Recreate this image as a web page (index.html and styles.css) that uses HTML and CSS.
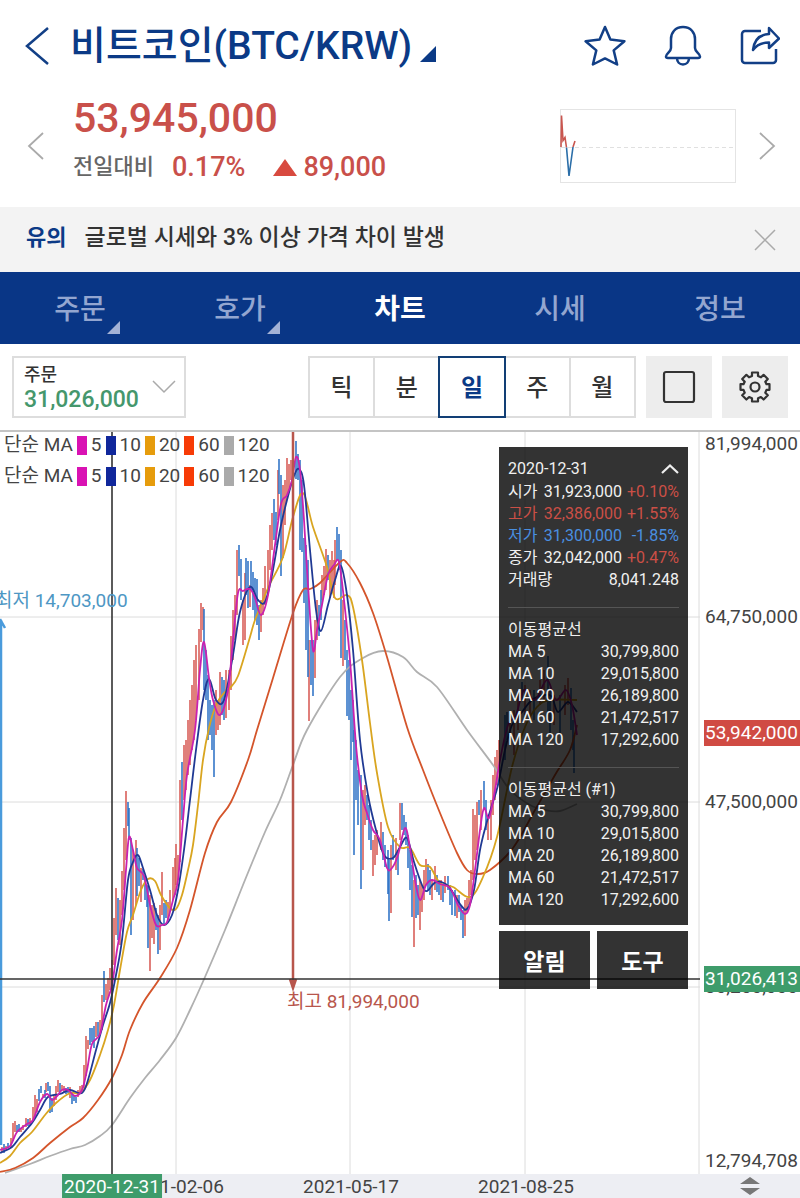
FILE: index.html
```html
<!DOCTYPE html>
<html lang="ko">
<head>
    <meta charset="UTF-8">
    <meta name="viewport" content="width=device-width, initial-scale=1">
    <title>비트코인(BTC/KRW)</title>
    <link rel="stylesheet" href="styles.css">
</head>
<body>
<header class="header">
    <div class="header__top">
        <button class="icon-button" aria-label="뒤로">
            <svg width="26" height="40" viewBox="0 0 26 40"><path d="M24 2L3 20l21 18" fill="none" stroke="#123f86" stroke-width="2.5"/></svg>
        </button>
        <h1 class="header__title">비트코인(BTC/KRW)</h1>
        <span class="corner corner--title"></span>
        <div class="header__actions">
            <button class="icon-button" aria-label="관심">
                <svg width="42" height="42" viewBox="0 0 42 42"><path d="M21 2l5.400 12.600 14 1.600-10.700 9.200 3.400 14.100L21 33.400 8.900 39.500l3.400-14.100L1.600 16.200l14-1.600z" fill="none" stroke="#123f86" stroke-width="2.500" stroke-linejoin="round"/></svg>
            </button>
            <button class="icon-button" aria-label="알림 설정">
                <svg width="38" height="42" viewBox="0 0 38 42"><g fill="none" stroke="#123f86" stroke-width="2.500" stroke-linejoin="round"><path d="M19 2C11 2 7 8 7 14v9c0 4-5 5.500-5 8.500 0 1 .8 1.500 2 1.500h30c1.200 0 2-.5 2-1.500 0-3-5-4.500-5-8.500v-9C31 8 27 2 19 2z"/><path d="M13 33c0 4 2.500 6.500 6 6.500s6-2.500 6-6.500"/></g></svg>
            </button>
            <button class="icon-button" aria-label="공유">
                <svg width="40" height="42" viewBox="0 0 40 42"><g fill="none" stroke="#123f86" stroke-width="2.500" stroke-linejoin="round"><path d="M21 6H5a3 3 0 0 0-3 3v26a3 3 0 0 0 3 3h28a3 3 0 0 0 3-3V24"/><path d="M29 3l10 10.500L29 23v-5.500c-7 0-12 2-16 7.500C14 16 19 9.500 29 9z"/></g></svg>
            </button>
        </div>
    </div>
    <div class="quote">
        <button class="icon-button" aria-label="이전 종목">
            <svg width="18" height="28" viewBox="0 0 18 28"><path d="M16 1L2 14l14 13" fill="none" stroke="#aaa" stroke-width="1.8"/></svg>
        </button>
        <div class="quote__info">
            <div class="quote__price">53,945,000</div>
            <div class="quote__change">
                <span class="quote__label">전일대비</span>
                <span>0.17%</span>
                <span class="quote__diff">89,000</span>
            </div>
        </div>
        <svg class="quote__spark" viewBox="0 0 176 74">
            <rect x=".5" y=".5" width="175" height="73" fill="#fff" stroke="#e4e4e4"/>
            <path d="M1 38.500h174" stroke="#e0e0e0" stroke-dasharray="4 3"/>
            <path d="M1 38L1.500 6.500l1.500 25 2-3 1.500 10M13 38l2-6" fill="none" stroke="#c9564f" stroke-width="1.6"/>
            <path d="M6.500 38.500L9 67l4-29" fill="none" stroke="#2b6ea8" stroke-width="1.6"/>
        </svg>
        <button class="icon-button" aria-label="다음 종목">
            <svg width="18" height="28" viewBox="0 0 18 28"><path d="M2 1l14 13L2 27" fill="none" stroke="#aaa" stroke-width="1.8"/></svg>
        </button>
    </div>
</header>

<div class="notice">
    <b class="notice__type">유의</b>
    <span class="notice__text">글로벌 시세와 3% 이상 가격 차이 발생</span>
    <button class="icon-button" aria-label="닫기">
        <svg width="22" height="22" viewBox="0 0 22 22"><path d="M1 1l20 20M21 1L1 21" stroke="#aaa" stroke-width="1.5"/></svg>
    </button>
</div>

<nav class="tabs">
    <a class="tabs__item" href="#order"><span class="tabs__name">주문<i class="corner corner--tab"></i></span></a>
    <a class="tabs__item" href="#book"><span class="tabs__name">호가<i class="corner corner--tab"></i></span></a>
    <a class="tabs__item tabs__item--active" href="#chart">차트</a>
    <a class="tabs__item" href="#ticks">시세</a>
    <a class="tabs__item" href="#info">정보</a>
</nav>

<div class="toolbar">
    <div class="order">
        <label class="order__label" for="orderPrice">주문</label>
        <select class="order__select" id="orderPrice">
            <option>31,026,000</option>
        </select>
        <svg class="order__arrow" width="24" height="14" viewBox="0 0 24 14"><path d="M1 1l11 11L23 1" fill="none" stroke="#aaa" stroke-width="1.5"/></svg>
    </div>
    <div class="periods">
        <button class="periods__item">틱</button>
        <button class="periods__item">분</button>
        <button class="periods__item periods__item--active">일</button>
        <button class="periods__item">주</button>
        <button class="periods__item">월</button>
    </div>
    <button class="tool" aria-label="전체 화면">
        <svg width="34" height="34" viewBox="0 0 34 34"><rect x="2" y="2" width="30" height="30" rx="2" fill="none" stroke="#333" stroke-width="2.2"/></svg>
    </button>
    <button class="tool" aria-label="설정">
        <svg width="32" height="32" viewBox="0 0 32 32"><g fill="none" stroke="#333" stroke-width="2.2" stroke-linejoin="round"><path d="M13 1.500h6v3.500l3 1.300 2.600-2.500 4.200 4.200-2.500 2.700 1.200 2.500h3v5.600h-3l-1.200 2.900 2.500 2.600-4.200 4.200-2.700-2.500-2.900 1.200v3.300h-6v-3.300l-2.900-1.200-2.700 2.500-4.200-4.200 2.500-2.600-1.200-2.900h-3v-5.600h3l1.200-2.500-2.500-2.700 4.200-4.200 2.600 2.500 3-1.300z"/><circle cx="16" cy="16" r="4.500"/></g></svg>
    </button>
</div>

<main class="chart">
    <div class="plot">
        <svg class="plot__svg" id="plot" viewBox="0 432 700 742" preserveAspectRatio="none">
            <path class="grid" d="M0 617H700M0 802H700M0 987H700M176 432V1174M350 432V1174M525 432V1174M699 432V1174"/>
        </svg>
        <ul class="legend">
            <li>단순 MA</li>
            <li class="legend__ma legend__ma--5">5</li>
            <li class="legend__ma legend__ma--10">10</li>
            <li class="legend__ma legend__ma--20">20</li>
            <li class="legend__ma legend__ma--60">60</li>
            <li class="legend__ma legend__ma--120">120</li>
        </ul>
        <ul class="legend">
            <li>단순 MA</li>
            <li class="legend__ma legend__ma--5">5</li>
            <li class="legend__ma legend__ma--10">10</li>
            <li class="legend__ma legend__ma--20">20</li>
            <li class="legend__ma legend__ma--60">60</li>
            <li class="legend__ma legend__ma--120">120</li>
        </ul>
        <span class="mark mark--low">최저 14,703,000</span>
        <span class="mark mark--high">최고 81,994,000</span>
        <div class="overlay">
            <section class="panel">
                <div class="panel__head">
                    <span>2020-12-31</span>
                    <button class="icon-button" aria-label="접기">
                        <svg width="18" height="12" viewBox="0 0 18 12"><path d="M1 10l8-7.500L17 10" fill="none" stroke="#eee" stroke-width="2.2"/></svg>
                    </button>
                </div>
                <table class="panel__table panel__table--day">
                    <tr><th>시가</th><td>31,923,000</td><td class="up">+0.10%</td></tr>
                    <tr class="up"><th>고가</th><td>32,386,000</td><td>+1.55%</td></tr>
                    <tr class="down"><th>저가</th><td>31,300,000</td><td>-1.85%</td></tr>
                    <tr><th>종가</th><td>32,042,000</td><td class="up">+0.47%</td></tr>
                    <tr><th>거래량</th><td colspan="2">8,041.248</td></tr>
                </table>
                <table class="panel__table panel__table--ma">
                    <caption>이동평균선</caption>
                    <tr><th>MA 5</th><td>30,799,800</td></tr>
                    <tr><th>MA 10</th><td>29,015,800</td></tr>
                    <tr><th>MA 20</th><td>26,189,800</td></tr>
                    <tr><th>MA 60</th><td>21,472,517</td></tr>
                    <tr><th>MA 120</th><td>17,292,600</td></tr>
                </table>
                <table class="panel__table panel__table--ma">
                    <caption>이동평균선 (#1)</caption>
                    <tr><th>MA 5</th><td>30,799,800</td></tr>
                    <tr><th>MA 10</th><td>29,015,800</td></tr>
                    <tr><th>MA 20</th><td>26,189,800</td></tr>
                    <tr><th>MA 60</th><td>21,472,517</td></tr>
                    <tr><th>MA 120</th><td>17,292,600</td></tr>
                </table>
            </section>
            <div class="overlay__buttons">
                <button class="overlay__button">알림</button>
                <button class="overlay__button">도구</button>
            </div>
        </div>
    </div>
    <div class="prices" id="prices"></div>
    <div class="dates" id="dates"></div>
    <button class="resize" aria-label="차트 높이 조절">
        <svg width="20" height="18" viewBox="0 0 20 18"><path d="M10 0l10 7H0zM10 18L0 11h20z" fill="#777"/></svg>
    </button>
</main>
<script src="chart.js"></script>
</body>
</html>
```
FILE: styles.css
```css
* {
    box-sizing: border-box;
}
html, body {
    margin: 0;
    padding: 0;
}
body {
    display: flex;
    flex-direction: column;
    min-height: 100vh;
    overflow-x: hidden;
    background-color: #fff;
    color: #333;
    font-family: Roboto, "Noto Sans CJK KR", sans-serif;
}
button, select {
    font-family: inherit;
    color: inherit;
}
.icon-button {
    display: flex;
    padding: 0;
    border: none;
    background: none;
}
.corner {
    border-style: solid;
    border-color: transparent;
}
.corner--title {
    align-self: flex-end;
    margin: 0 0 30px 8px;
    border-width: 0 0 16px 16px;
    border-bottom-color: #0b3a86;
}
.corner--tab {
    position: absolute;
    right: -14px;
    bottom: -4px;
    border-width: 0 0 13px 13px;
    border-bottom-color: #a3b2d6;
}

/* header */
.header {
    padding: 0 20px 0 24px;
}
.header__top {
    display: flex;
    align-items: center;
    height: 92px;
}
.header__title {
    margin: 0 0 0 20px;
    font-size: 39px;
    line-height: 48px;
    font-weight: 500;
    white-space: nowrap;
    color: #0b3a86;
}
.header__actions {
    display: flex;
    align-items: center;
    gap: 38px;
    margin-left: auto;
}
.quote {
    display: flex;
    align-items: center;
    height: 115px;
    padding: 0 4px 8px 3px;
}
.quote__info {
    flex: 1;
    margin-left: 28px;
    padding-bottom: 11px;
    font-weight: 500;
    color: #c9504a;
}
.quote__price {
    font-size: 41px;
    line-height: 54px;
}
.quote__change {
    display: flex;
    align-items: center;
    gap: 18px;
    font-size: 27px;
    line-height: 44px;
}
.quote__label {
    font-size: 22px;
    color: #666;
}
.quote__diff {
    display: flex;
    align-items: center;
    gap: 6px;
    margin-left: 10px;
}
.quote__diff::before {
    content: "";
    border: solid transparent;
    border-width: 0 12px 17px;
    border-bottom-color: #d84a3f;
}
.quote__spark {
    width: 176px;
    height: 74px;
    margin-right: 22px;
}

/* notice */
.notice {
    display: flex;
    align-items: center;
    gap: 18px;
    height: 65px;
    padding: 0 24px 0 26px;
    background-color: #f3f3f3;
    font-size: 22px;
    line-height: 32px;
}
.notice__type {
    padding-bottom: 4px;
    color: #0b3a86;
}
.notice__text {
    flex: 1;
    padding-bottom: 4px;
    font-size: 23px;
    font-weight: 500;
}

/* tabs */
.tabs {
    display: flex;
    height: 72px;
    padding-top: 4px;
    background-color: #093686;
}
.tabs__item {
    flex: 1;
    display: flex;
    align-items: center;
    justify-content: center;
    font-size: 28px;
    line-height: 40px;
    font-weight: 500;
    color: #93a6d0;
    text-decoration: none;
}
.tabs__name {
    position: relative;
}
.tabs__item--active {
    font-weight: 700;
    color: #fff;
}

/* toolbar */
.toolbar {
    display: flex;
    align-items: center;
    gap: 10px;
    height: 88px;
    padding: 0 12px;
    border-bottom: 2px solid #c4c4c4;
}
.order {
    position: relative;
    width: 174px;
    height: 62px;
    margin-right: auto;
    padding: 6px 10px;
    border: 2px solid #ddd;
}
.order__label {
    display: block;
    font-size: 18px;
    line-height: 22px;
    font-weight: 500;
}
.order__select {
    display: block;
    width: 100%;
    height: 24px;
    padding: 0;
    border: none;
    background: none;
    appearance: none;
    font-size: 23px;
    font-weight: 500;
    color: #45976c;
}
.order__arrow {
    position: absolute;
    right: 8px;
    top: 22px;
    pointer-events: none;
}
.periods {
    display: flex;
    width: 328px;
    height: 62px;
}
.periods__item {
    flex: 1;
    margin-right: -2px;
    padding: 0 0 4px;
    border: 2px solid #ddd;
    background-color: #fff;
    font-size: 24px;
    font-weight: 500;
}
.periods__item:last-child {
    margin-right: 0;
}
.periods__item--active {
    position: relative;
    border-color: #123f75;
    color: #0b3a86;
    font-weight: 700;
}
.tool {
    display: flex;
    align-items: center;
    justify-content: center;
    width: 66px;
    height: 62px;
    padding: 0;
    border: none;
    background-color: #ededed;
}

/* chart */
.chart {
    flex: 1;
    display: grid;
    grid-template-columns: 1fr 100px;
    grid-template-rows: 1fr 24px;
    min-height: 620px;
    font-size: 19px;
    line-height: 26px;
    color: #444;
}
.plot {
    position: relative;
    overflow: hidden;
}
.plot__svg {
    position: absolute;
    width: 100%;
    height: 100%;
}
.plot__svg path {
    fill: none;
}
.grid {
    stroke: #dcdcdc;
}
.candles {
    stroke-width: 1.6;
}
.candles--up {
    stroke: #d9605a;
}
.candles--down {
    stroke: #3577c8;
}
.line {
    stroke-width: 1.8;
    stroke-linejoin: round;
}
.line--5 {
    stroke: #c922b0;
}
.line--10 {
    stroke: #203a94;
}
.line--20 {
    stroke: #d9a520;
}
.line--60 {
    stroke: #d4552b;
}
.line--120 {
    stroke: #b0b0b0;
}
.cross {
    stroke: #333;
    stroke-width: 1.6;
}
.arrow {
    stroke-width: 2.5;
}
.arrow--high {
    stroke: #b8564c;
}
.arrow--low {
    stroke: #4a9bdc;
}
.legend {
    position: relative;
    display: flex;
    gap: 4px;
    margin: 0 0 5px;
    padding: 0 4px;
    list-style: none;
}
.legend__ma {
    display: flex;
    align-items: center;
    gap: 4px;
}
.legend__ma::before {
    content: "";
    width: 10px;
    height: 19px;
}
.legend__ma--5::before {
    background-color: #d912b3;
}
.legend__ma--10::before {
    background-color: #10279b;
}
.legend__ma--20::before {
    background-color: #e69c0c;
}
.legend__ma--60::before {
    background-color: #f73b06;
}
.legend__ma--120::before {
    background-color: #aaa;
}
.mark {
    position: absolute;
    white-space: nowrap;
}
.mark--low {
    left: -5px;
    top: 21%;
    color: #4e97c4;
}
.mark--high {
    left: 41%;
    top: 75%;
    color: #b8564c;
}
.overlay {
    position: absolute;
    top: 15px;
    right: 12px;
    width: 189px;
}
.panel {
    padding: 10px 9px 14px;
    background-color: rgba(0, 0, 0, .8);
    font-size: 16px;
    line-height: 22px;
    color: #f0f0f0;
}
.panel__head {
    display: flex;
    align-items: center;
    justify-content: space-between;
    height: 24px;
}
.panel__table {
    width: 100%;
    border-collapse: collapse;
}
.panel__table caption {
    padding-top: 11px;
    border-top: 1px solid #555;
    text-align: left;
    white-space: nowrap;
}
.panel__table th, .panel__table td {
    height: 22px;
    padding: 0;
    font-weight: 400;
    text-align: left;
    white-space: nowrap;
}
.panel__table td {
    text-align: right;
}
.panel__table--day {
    table-layout: fixed;
}
.panel__table--day th {
    width: 34px;
}
.panel__table--day td:last-child {
    width: 57px;
}
.panel__table--ma {
    margin-top: 16px;
}
.panel .up {
    color: #cb4f46;
}
.panel .down {
    color: #4a8fe0;
}
.overlay__buttons {
    display: flex;
    gap: 7px;
    margin-top: 6px;
}
.overlay__button {
    flex: 1;
    height: 58px;
    border: none;
    background-color: rgba(0, 0, 0, .8);
    font-size: 23px;
    font-weight: 700;
    color: #fff;
}
.prices {
    position: relative;
}
.prices__item {
    position: absolute;
    left: 4px;
    right: 0;
    padding-left: 1px;
    transform: translateY(-50%);
}
.prices__item--last {
    background-color: #d04b43;
    color: #fff;
}
.prices__item--cross {
    background-color: #3e9c6b;
    color: #fff;
}
.dates {
    position: relative;
    overflow: hidden;
    background-color: #edeef3;
}
.dates__item {
    position: absolute;
    transform: translateX(-50%);
    white-space: nowrap;
}
.dates__item--cross {
    padding: 0 2px;
    background-color: #3e9c6b;
    color: #fff;
}
.resize {
    display: flex;
    align-items: center;
    justify-content: center;
    padding: 0;
    border: none;
    background-color: #edeef3;
}
```
FILE: chart.js
```js
// candles: x, high, low
let up = [
        [2,1147,1152],[6,1146,1150],[11,1138,1147],[13,1123,1141],[15,1121,1132],[21,1128,1132],[23,1125,1130],[26,1118,1127],[30,1118,1125],[33,1107,1122],
        [35,1095,1116],[37,1099,1112],[43,1094,1098],[46,1083,1092],[54,1096,1106],[56,1086,1100],[58,1080,1092],[62,1085,1090],[64,1086,1092],[70,1087,1098],
        [78,1090,1097],[80,1086,1094],[82,1085,1092],[84,1065,1088],[86,1036,1076],[88,1040,1049],[96,1022,1037],[100,1020,1035],[102,995,1030],[106,984,1000],
        [108,978,998],[110,968,990],[112,960,988],[114,918,965],[116,888,935],[120,900,945],[122,871,915],[124,828,890],[126,791,860],[133,850,920],
        [136,840,905],[141,868,902],[150,895,971],[152,905,938],[154,903,944],[160,905,950],[162,872,915],[168,902,920],[170,890,912],[173,867,900],
        [175,858,895],[176,844,885],[178,855,880],[180,780,862],[184,745,800],[186,740,790],[188,720,775],[190,700,765],[192,685,750],[194,660,740],
        [196,645,720],[199,629,700],[201,603,642],[203,607,630],[216,690,735],[218,700,730],[220,672,725],[226,670,718],[229,670,710],[231,636,690],
        [233,610,660],[235,595,640],[237,550,615],[243,600,645],[245,573,640],[250,585,607],[261,600,632],[263,588,615],[265,566,605],[268,550,590],
        [270,525,570],[272,513,550],[278,470,520],[283,485,558],[285,480,525],[287,458,500],[289,464,490],[291,460,480],[293,432,465],[309,640,721],
        [315,620,678],[317,600,640],[322,575,600],[324,566,595],[326,549,590],[330,560,598],[332,551,590],[334,560,598],[335,540,585],[343,600,666],
        [363,790,870],[365,785,825],[373,840,876],[375,835,865],[377,830,855],[381,822,850],[391,845,913],[396,838,870],[400,803,840],[414,880,947],
        [420,880,930],[422,885,912],[424,870,900],[426,859,885],[432,880,900],[435,866,890],[441,880,900],[445,876,893],[457,895,918],[465,900,936],
        [467,898,912],[469,880,905],[471,870,895],[473,809,880],[475,815,860],[477,802,850],[481,790,830],[488,815,840],[491,800,840],[493,775,815],
        [495,757,800],[497,750,785],[499,740,780],[510,720,745],[514,710,755],[518,690,730],[525,685,715],[530,690,720],[540,680,705],[544,670,700],
        [554,695,725],[565,685,715],[568,678,705]
    ],
    down = [
        [4,1144,1153],[8,1143,1148],[17,1125,1132],[19,1124,1132],[28,1119,1126],[39,1089,1101],[41,1086,1093],[45,1090,1098],[48,1082,1091],[50,1086,1113],
        [52,1098,1112],[60,1083,1092],[66,1088,1094],[68,1087,1093],[72,1092,1104],[74,1096,1101],[76,1097,1103],[90,1028,1045],[92,1028,1042],[94,1026,1048],
        [98,1022,1036],[104,971,1002],[118,898,940],[128,802,826],[129,808,840],[131,838,935],[137,848,896],[139,858,886],[143,869,880],[145,875,900],
        [147,885,907],[148,886,948],[156,908,930],[158,915,954],[164,903,924],[166,900,918],[182,762,820],[204,609,690],[206,650,700],[208,675,740],
        [210,700,735],[212,705,750],[214,700,777],[222,677,715],[224,680,720],[239,545,576],[241,559,600],[246,558,595],[248,561,608],[251,561,590],
        [253,572,610],[255,578,620],[257,579,625],[259,605,640],[274,499,540],[276,512,545],[279,459,494],[281,475,576],[296,441,479],[298,454,480],
        [300,460,550],[302,480,552],[304,538,603],[306,545,650],[308,560,677],[311,640,685],[313,640,696],[319,605,636],[321,590,620],[328,555,580],
        [337,527,560],[339,534,570],[341,550,658],[345,620,660],[347,650,716],[349,660,720],[351,690,760],[353,700,742],[354,730,855],[356,740,800],
        [358,770,825],[361,775,889],[367,795,820],[369,805,840],[371,820,850],[383,832,860],[385,845,867],[388,850,894],[389,860,921],[393,835,860],
        [398,850,875],[402,803,830],[404,815,835],[406,822,845],[408,835,868],[410,850,890],[412,865,917],[416,875,918],[418,885,915],[428,864,890],
        [430,870,895],[437,875,892],[439,880,895],[443,885,902],[448,876,890],[450,885,905],[452,890,915],[455,890,916],[459,895,912],[461,905,920],
        [463,910,938],[479,800,815],[484,781,810],[486,800,830],[505,715,760],[507,712,740],[522,682,700],[534,690,720],[548,656,720],[550,690,735],
        [560,695,735],[571,688,730],[573,720,750],[574,735,773]
    ],
    // moving averages: x, y
    averages = {
        120: [[5,1173],[30,1164],[50,1156],[70,1149],[85,1145],[100,1136],[112,1125],[130,1098],[145,1078],[160,1060],[176,1038],[190,1010],[205,977],[225,930],[245,880],[265,832],[280,800],[293,765],[307,730],[340,677],[363,658],[383,651],[403,657],[417,672],[437,687],[467,730],[493,765],[510,790],[530,805],[545,810],[560,811],[577,804]],
        60: [[0,1172],[15,1168],[33,1158],[50,1143],[70,1127],[83,1118],[98,1100],[112,1078],[122,1055],[130,1030],[143,1003],[160,978],[177,948],[190,910],[205,853],[217,822],[231,802],[248,760],[257,730],[273,678],[293,613],[303,590],[310,589],[320,583],[340,562],[347,563],[360,583],[373,613],[387,657],[407,727],[423,770],[440,813],[457,853],[467,870],[477,874],[490,870],[513,848],[535,810],[555,775],[570,750],[577,725]],
        20: [[0,1163],[10,1156],[20,1143],[32,1132],[45,1115],[56,1103],[70,1093],[80,1093],[90,1080],[100,1055],[108,1030],[114,1005],[120,970],[127,932],[133,915],[141,890],[148,879],[155,881],[161,895],[170,908],[176,909],[182,895],[188,870],[193,845],[198,805],[203,760],[209,728],[216,705],[224,693],[230,688],[238,676],[250,637],[255,620],[268,588],[283,557],[293,517],[303,493],[313,527],[327,567],[335,598],[347,595],[353,607],[362,660],[370,723],[377,773],[388,827],[400,847],[410,848],[420,865],[430,867],[440,883],[453,887],[470,897],[483,877],[497,837],[512,767],[525,727],[537,707],[550,700],[577,700]],
        10: [[0,1153],[12,1147],[20,1137],[32,1123],[40,1110],[48,1097],[60,1094],[70,1090],[82,1093],[88,1080],[96,1050],[103,1025],[110,1003],[116,975],[122,940],[128,880],[133,862],[138,855],[143,868],[150,890],[157,915],[164,925],[172,915],[178,890],[184,850],[190,800],[196,750],[203,700],[209,679],[216,700],[224,700],[233,655],[240,612],[250,587],[258,600],[265,602],[272,575],[280,530],[287,500],[294,476],[299,469],[304,485],[310,550],[316,610],[321,631],[328,605],[335,580],[341,566],[347,595],[353,650],[360,740],[368,795],[376,830],[384,855],[393,858],[400,847],[407,838],[414,862],[422,885],[427,891],[436,882],[448,886],[460,904],[467,909],[474,890],[480,850],[486,825],[492,805],[498,785],[505,750],[512,725],[522,712],[532,700],[545,695],[552,697],[558,712],[568,702],[577,712]],
        5: [[0,1150],[10,1146],[17,1132],[27,1124],[33,1120],[40,1102],[47,1094],[52,1100],[57,1096],[62,1090],[68,1090],[75,1096],[82,1090],[87,1070],[92,1044],[100,1034],[106,1005],[112,985],[117,950],[122,920],[126,870],[129,837],[133,850],[137,868],[144,876],[150,905],[156,925],[162,925],[167,922],[173,900],[178,880],[183,820],[187,775],[195,730],[200,670],[204,642],[209,678],[213,700],[220,715],[228,690],[233,640],[238,593],[243,591],[250,589],[255,598],[261,615],[268,595],[275,545],[281,504],[287,495],[292,480],[296,457],[300,470],[304,520],[308,585],[313,650],[317,630],[322,605],[328,575],[334,565],[339,562],[344,600],[350,660],[356,745],[362,795],[367,813],[373,830],[380,840],[387,868],[392,868],[398,855],[405,828],[410,848],[415,880],[420,900],[426,885],[432,880],[440,884],[450,888],[458,905],[465,914],[470,905],[475,870],[480,830],[484,808],[489,818],[495,790],[500,760],[508,725],[516,715],[524,690],[535,700],[547,680],[556,700],[566,690],[572,705],[577,735]]
    },
    plotTop = 432,
    plotHeight = 742,
    plotSvg = document.getElementById('plot'),
    addPath = function (className, d) {
        let path = document.createElementNS('http://www.w3.org/2000/svg', 'path');
        path.setAttribute('class', className);
        path.setAttribute('d', d);
        plotSvg.appendChild(path);
    },
    bars = function (list) {
        return list.map(function (b) {
            return 'M' + b[0] + ' ' + b[1] + 'V' + b[2];
        }).join('');
    },
    // smooth curve through all the points
    curve = function (p) {
        let d = 'M' + p[0];
        for (let i = 0; i < p.length - 1; i++) {
            let a = p[i - 1] || p[i], b = p[i], c = p[i + 1], e = p[i + 2] || c;
            d += 'C' + [
                b[0] + (c[0] - a[0]) / 6, b[1] + (c[1] - a[1]) / 6,
                c[0] - (e[0] - b[0]) / 6, c[1] - (e[1] - b[1]) / 6,
                c[0], c[1]
            ].join(' ');
        }
        return d;
    },
    addLabel = function (box, className, side, percent, text) {
        let label = document.createElement('span');
        label.className = className;
        label.style[side] = percent + '%';
        label.textContent = text;
        box.appendChild(label);
    },
    priceAxis = document.getElementById('prices'),
    dateAxis = document.getElementById('dates');

addPath('candles candles--up', bars(up));
addPath('candles candles--down', bars(down));
[120, 60, 20, 10, 5].forEach(function (n) {
    addPath('line line--' + n, curve(averages[n]));
});
addPath('arrow arrow--low', 'M1 1145V620M0 619L5 628');
addPath('arrow arrow--high', 'M293 432V988M290 979L293 988L296 979');
addPath('cross', 'M0 979H700M112 432V1174');

[
    ['', 444, '81,994,000'],
    ['', 617, '64,750,000'],
    ['', 802, '47,500,000'],
    ['', 987, '30,250,000'],
    ['', 1161, '12,794,708'],
    [' prices__item--last', 733, '53,942,000'],
    [' prices__item--cross', 979, '31,026,413']
].forEach(function (p) {
    addLabel(priceAxis, 'prices__item' + p[0], 'top', (p[1] - plotTop) / plotHeight * 100, p[2]);
});
[
    ['', 176, '2021-02-06'],
    ['', 351, '2021-05-17'],
    ['', 526, '2021-08-25'],
    [' dates__item--cross', 112, '2020-12-31']
].forEach(function (t) {
    addLabel(dateAxis, 'dates__item' + t[0], 'left', t[1] / 7, t[2]);
});
```
